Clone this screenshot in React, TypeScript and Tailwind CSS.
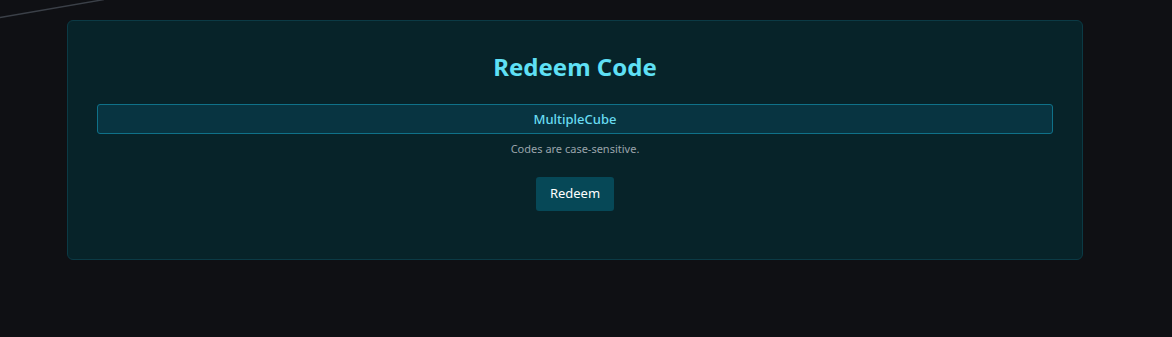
import React from "react";

export default function App() {
  return (
    <div
      className="relative min-h-[337px] w-full overflow-hidden bg-[#0f1014] pt-[20px]"
      style={{ fontFamily: '"Noto Sans", "Open Sans", sans-serif' }}
    >
      <svg
        className="pointer-events-none absolute left-0 top-0"
        width="120"
        height="24"
        viewBox="0 0 120 24"
      >
        <line x1="0" y1="17.5" x2="104" y2="-0.5" stroke="#3b4048" strokeWidth="1.3" />
      </svg>
      <div className="ml-[67px] flex h-[240px] w-[1016px] flex-col items-center rounded-[6px] border border-[#0b3a45] bg-[#072329] px-[29px] pt-[30px]">
        <h1 className="text-[24px] font-bold leading-[32px] text-[#5fe0f5]">Redeem Code</h1>
        <div className="mt-[21px] flex h-[30px] w-full items-center justify-center rounded-[3px] border border-[#0f7189] bg-[#083441] pt-[2px]">
          <span className="text-[13px] font-medium text-[#68dcf2]">MultipleCube</span>
        </div>
        <p className="mt-[7px] text-[11px] leading-[16px] text-[#9aa3ab]">Codes are case-sensitive.</p>
        <button className="mt-[20px] h-[34px] w-[78px] rounded-[3px] bg-[#064857] text-[13px] font-normal text-white">
          Redeem
        </button>
      </div>
    </div>
  );
}
